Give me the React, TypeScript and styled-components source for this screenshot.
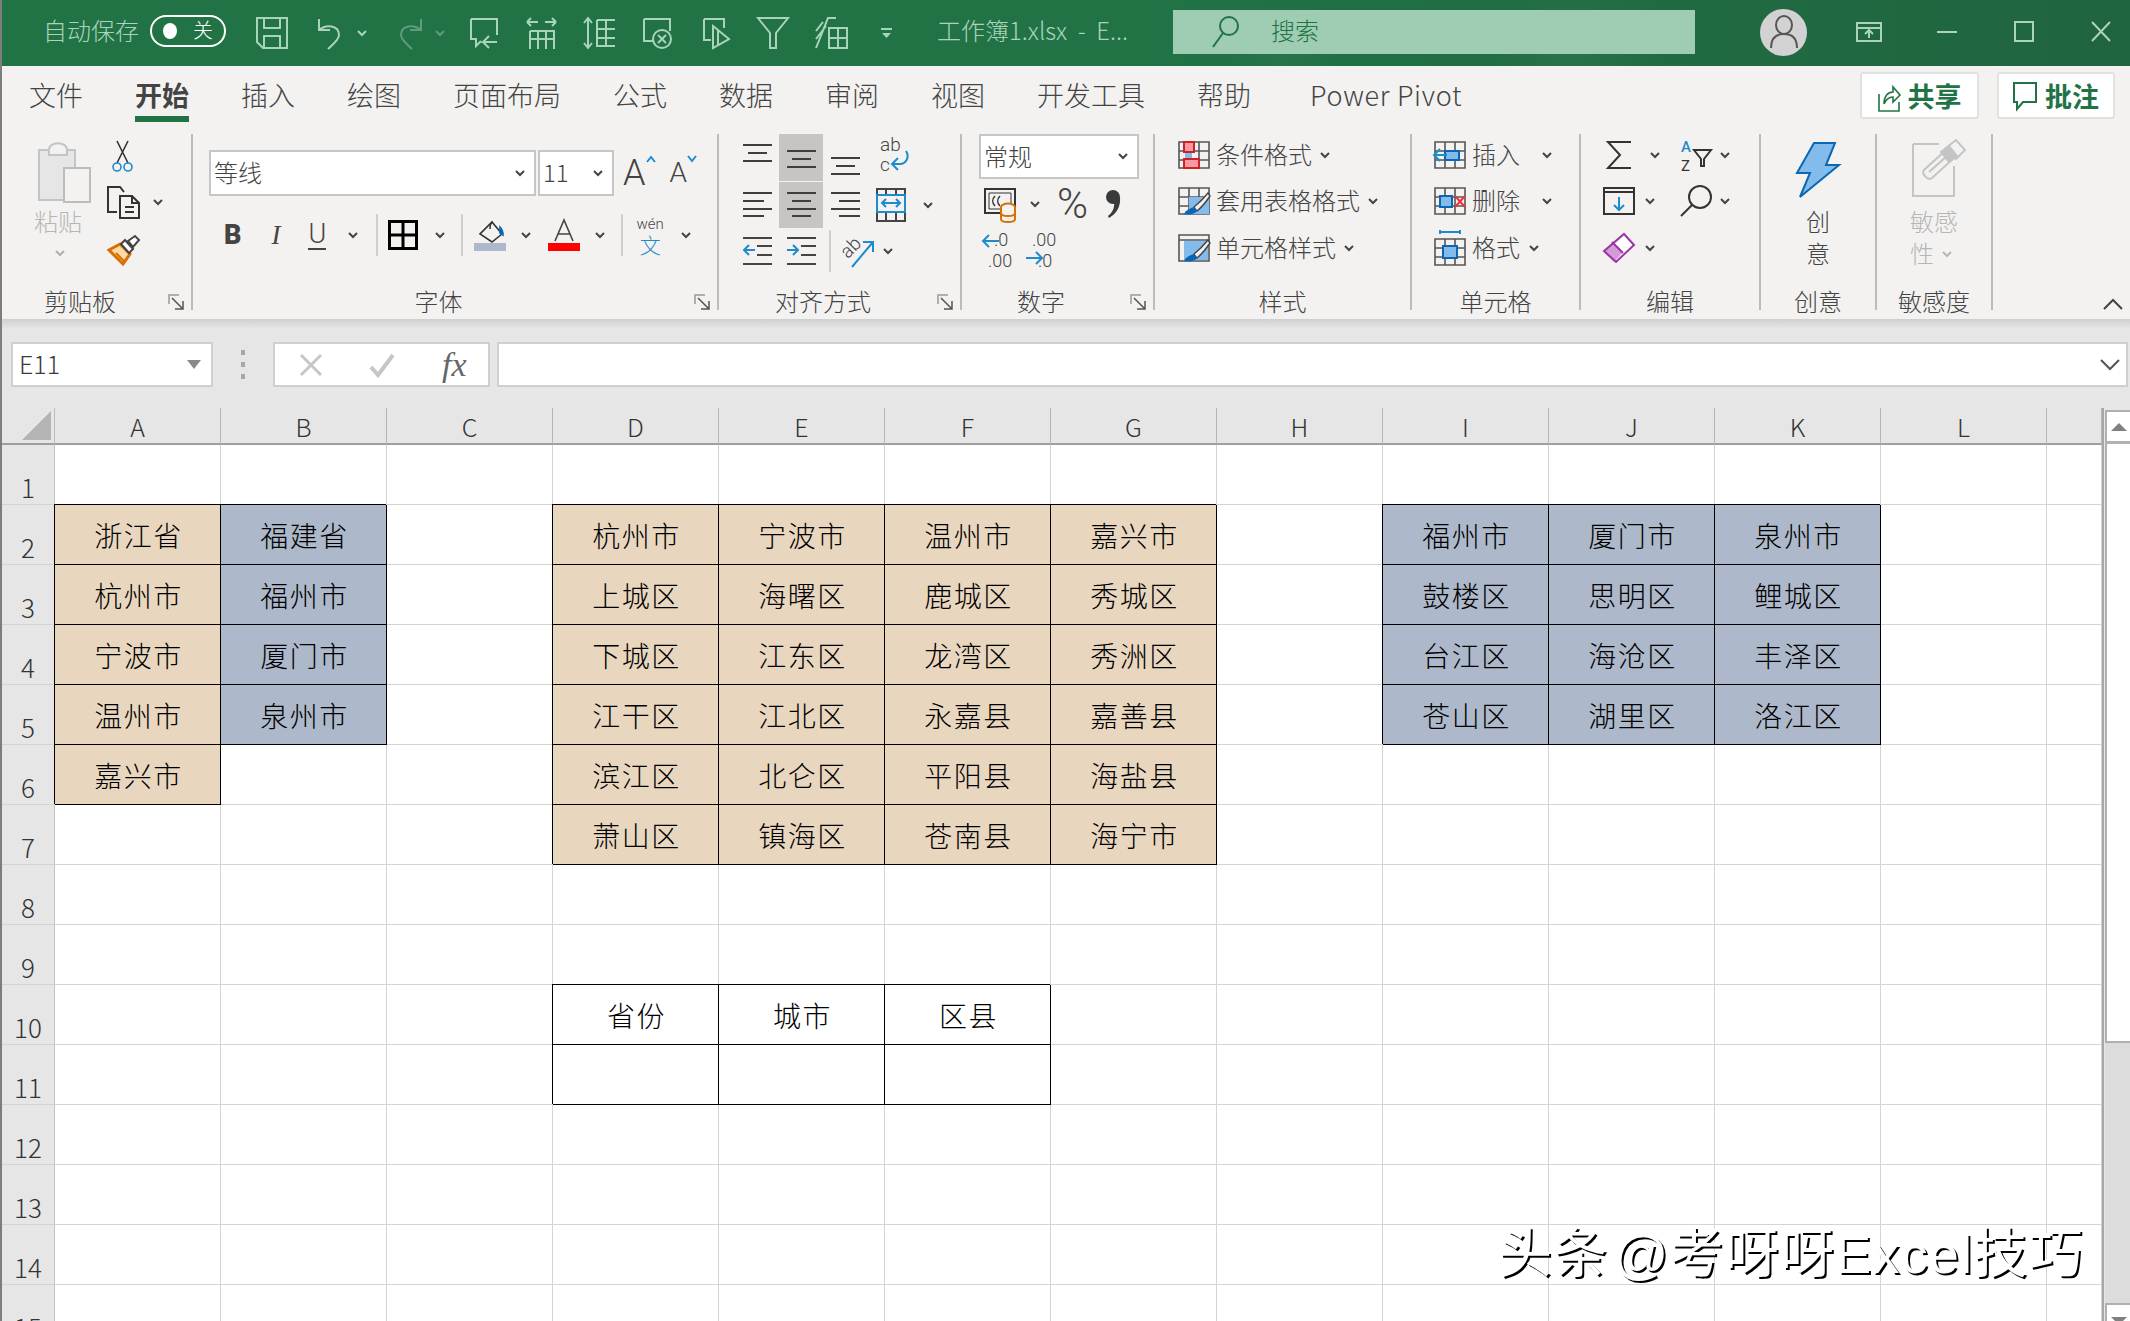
import React from "react";
import styled, { createGlobalStyle } from "styled-components";

const CJK = `"Noto Sans CJK SC", "Noto Sans", sans-serif`;
const INK = "#444";
const BLUE = "#1e8bcd";
const SKY = "#83bbec";
const NAVY = "#0b67b3";
const QAT = "#a9d3bb";

const Global = createGlobalStyle`
  html, body { margin: 0; padding: 0; width: 2130px; height: 1321px; overflow: hidden; background: #fff; }
  body { font-family: ${CJK}; color: #000; }
  svg { display: block; overflow: visible; }
`;

const Window = styled.div`
  position: relative;
  display: flex;
  flex-direction: column;
  box-sizing: border-box;
  width: 2130px;
  height: 1321px;
  overflow: hidden;
  border-left: 2px solid #7d7d7d;
  background: #f3f2f1;
`;

/* title bar */
const TitleBar = styled.header`
  display: flex;
  align-items: center;
  flex: none;
  height: 66px;
  padding-left: 41px;
  background:
    radial-gradient(circle at 1570px 60px, rgba(60, 130, 85, 0.28), transparent 90px),
    radial-gradient(circle at 1280px 70px, rgba(60, 130, 85, 0.22), transparent 60px),
    linear-gradient(90deg, #217346 0, #217346 52%, #20643f 100%);
  color: ${QAT};
  font-size: 24px;
  font-weight: 300;
`;

const BarText = styled.span`
  margin-bottom: 7px;
`;

const Toggle = styled.span`
  display: flex;
  align-items: center;
  justify-content: space-between;
  box-sizing: border-box;
  width: 76px;
  height: 32px;
  margin: 0 0 4px 11px;
  padding: 0 11px;
  border: 2px solid #fff;
  border-radius: 16px;
  color: #fff;
  font-size: 20px;
  line-height: 1;
`;

const ToggleText = styled.span`
  margin-bottom: 3px;
`;

const Knob = styled.i`
  width: 14px;
  height: 16px;
  border-radius: 50%;
  background: #fff;
`;

const Tool = styled.span<{ $ml?: number; $mb?: number; $mt?: number }>`
  display: inline-flex;
  flex: none;
  align-items: center;
  margin-left: ${(p) => p.$ml ?? 0}px;
  margin-bottom: ${(p) => p.$mb ?? 0}px;
  margin-top: ${(p) => p.$mt ?? 0}px;
`;

const DocName = styled.span`
  flex: none;
  width: 203px;
  margin: 0 0 7px 45px;
  white-space: pre;
`;

const SearchBox = styled.div`
  display: flex;
  align-items: center;
  flex: none;
  box-sizing: border-box;
  width: 522px;
  height: 44px;
  margin: 0 0 2px 33px;
  padding-left: 39px;
  background: #9fcdb3;
  color: #217346;
`;

const SearchText = styled.span`
  margin: 0 0 5px 32px;
`;

const Avatar = styled.span`
  display: flex;
  align-items: center;
  justify-content: center;
  flex: none;
  width: 47px;
  height: 47px;
  margin: 0 0 2px 65px;
  border-radius: 50%;
  background: #d2d2d2;
`;

/* tabs */
const TabRow = styled.nav`
  display: flex;
  flex: none;
  height: 64px;
  padding-left: 27px;
  gap: 52px;
  color: ${INK};
  font-size: 27px;
`;

const Tab = styled.span<{ $active?: boolean; $latin?: boolean }>`
  box-sizing: content-box;
  height: 42px;
  margin-left: ${(p) => (p.$latin ? 7 : 0)}px;
  padding-top: 8px;
  line-height: 42px;
  letter-spacing: ${(p) => (p.$latin ? 0.7 : 0)}px;
  font-weight: ${(p) => (p.$active ? 700 : 300)};
  border-bottom: 6px solid ${(p) => (p.$active ? "#217346" : "transparent")};
  white-space: nowrap;
`;

const TabActions = styled.div`
  display: flex;
  gap: 18px;
  margin-left: auto;
  padding: 6px 15px 0 0;
`;

const ActionBtn = styled.button<{ $w: number }>`
  display: flex;
  align-items: center;
  justify-content: center;
  gap: 8px;
  box-sizing: border-box;
  width: ${(p) => p.$w}px;
  height: 47px;
  padding: 0;
  border: 2px solid #e3e1df;
  border-radius: 3px;
  background: #fff;
  color: #217346;
  font: 700 27px ${CJK};
`;

/* ribbon */
const Ribbon = styled.section`
  display: flex;
  flex: none;
  height: 185px;
  padding-top: 4px;
`;

const Group = styled.div<{ $w: number }>`
  display: flex;
  flex-direction: column;
  flex: none;
  box-sizing: border-box;
  width: ${(p) => p.$w}px;
  height: 176px;
  border-right: 2px solid #bcbcbc;
`;

const GroupBody = styled.div`
  display: flex;
  flex: none;
  height: 152px;
`;

const GroupRows = styled.div`
  display: flex;
  flex-direction: column;
  flex: none;
  height: 152px;
`;

const GroupFoot = styled.div`
  display: flex;
  align-items: flex-end;
  height: 24px;
`;

const GroupName = styled.span`
  flex: 1;
  margin-bottom: -7px;
  color: ${INK};
  font-size: 24px;
  font-weight: 300;
  line-height: 32px;
  text-align: center;
`;

const Launcher = styled.span`
  flex: none;
  width: 17px;
  margin: 0 6px 0 10px;
`;

const ToolRow = styled.div<{ $h: number; $mt?: number }>`
  display: flex;
  align-items: center;
  flex: none;
  height: ${(p) => p.$h}px;
  margin-top: ${(p) => p.$mt ?? 0}px;
`;

const ToolText = styled.span<{ $ml?: number; $mt?: number; $muted?: boolean }>`
  flex: none;
  margin-top: ${(p) => p.$mt ?? 0}px;
  margin-left: ${(p) => p.$ml ?? 0}px;
  padding-bottom: 2px;
  color: ${(p) => (p.$muted ? "#b6b6b6" : INK)};
  font-size: 24px;
  font-weight: 300;
  line-height: 30px;
  white-space: nowrap;
`;

const PasteCol = styled.div`
  display: flex;
  flex-direction: column;
  align-items: flex-start;
  flex: none;
  width: 58px;
  margin-left: 32px;
  padding-top: 8px;
`;

const SmallCol = styled.div`
  display: flex;
  flex-direction: column;
  margin-left: 15px;
`;

const Combo = styled.div<{ $w: number; $h?: number; $ml?: number }>`
  display: flex;
  align-items: center;
  justify-content: space-between;
  flex: none;
  box-sizing: border-box;
  width: ${(p) => p.$w}px;
  height: ${(p) => p.$h ?? 46}px;
  margin-left: ${(p) => p.$ml ?? 0}px;
  padding: 0 9px 0 3px;
  border: 2px solid #c6c6c6;
  background: #fff;
  color: ${INK};
  font-size: 24px;
  font-weight: 300;
`;

const ComboText = styled.span`
  padding-bottom: 3px;
`;

const GrowGlyph = styled.span<{ $size: number; $ml: number }>`
  display: inline-flex;
  flex: none;
  align-items: flex-start;
  margin-left: ${(p) => p.$ml}px;
  color: ${INK};
  font: 300 ${(p) => p.$size}px/36px Roboto, sans-serif;
`;

const FontFace = styled.span<{ $ml: number; $kind: "b" | "i" | "u" }>`
  flex: none;
  margin-left: ${(p) => p.$ml}px;
  color: ${INK};
  font-family: ${(p) => (p.$kind === "i" ? `"Liberation Serif", serif` : `Roboto, sans-serif`)};
  font-size: 27px;
  font-style: ${(p) => (p.$kind === "i" ? "italic" : "normal")};
  font-weight: ${(p) => (p.$kind === "b" ? 900 : 300)};
  border-bottom: ${(p) => (p.$kind === "u" ? `2px solid ${INK}` : "0")};
  line-height: 28px;
`;

const VRule = styled.span<{ $ml: number }>`
  flex: none;
  width: 2px;
  height: 42px;
  margin-left: ${(p) => p.$ml}px;
  background: #cfcfcf;
`;

const AlignCell = styled.span<{ $on?: boolean }>`
  display: flex;
  align-items: center;
  justify-content: center;
  flex: none;
  width: 44px;
  height: 100%;
  background: ${(p) => (p.$on ? "#c6c5c3" : "transparent")};
`;

const Percent = styled.span<{ $ml: number }>`
  flex: none;
  margin-left: ${(p) => p.$ml}px;
  color: ${INK};
  font: 300 42px/44px Roboto, sans-serif;
`;

const WenStack = styled.span<{ $ml: number }>`
  display: flex;
  flex-direction: column;
  align-items: center;
  flex: none;
  width: 30px;
  margin-left: ${(p) => p.$ml}px;
  color: ${INK};
  font: 300 15px/18px Roboto, sans-serif;
`;

const WenChar = styled.span`
  color: ${BLUE};
  font: 300 21px/22px ${CJK};
`;

const BigCol = styled.div<{ $align: string; $ml?: number; $pt: number }>`
  display: flex;
  flex-direction: column;
  align-items: ${(p) => p.$align};
  width: 100%;
  margin-left: ${(p) => p.$ml ?? 0}px;
  padding-top: ${(p) => p.$pt}px;
`;

const Collapse = styled.div`
  flex: 1;
  display: flex;
  align-items: flex-end;
  justify-content: flex-end;
  height: 176px;
  padding-right: 7px;
`;

/* formula bar */
const FormulaBand = styled.section`
  display: flex;
  flex: none;
  height: 66px;
  padding-top: 23px;
  background: linear-gradient(180deg, #cfcfcf 0, #e6e6e6 10px);
`;

const FieldBox = styled.div<{ $w: number; $ml: number }>`
  display: flex;
  align-items: center;
  flex: none;
  box-sizing: border-box;
  width: ${(p) => p.$w}px;
  height: 45px;
  margin-left: ${(p) => p.$ml}px;
  border: 2px solid #cfcfcf;
  background: #fff;
`;

const NameText = styled.span`
  flex: 1;
  padding: 0 0 3px 6px;
  color: #3a3a3a;
  font-size: 25px;
  font-weight: 300;
`;

const Grip = styled.span`
  flex: none;
  width: 4px;
  height: 29px;
  margin: 8px 0 0 28px;
  background: repeating-linear-gradient(180deg, #a8a8a8 0 5px, transparent 5px 12px);
`;

const Fx = styled.span`
  margin-left: 47px;
  color: #666;
  font: italic 34px/1 "Liberation Serif", serif;
`;

const EndCaret = styled.span`
  margin-left: auto;
  padding-right: 6px;
`;

/* sheet */
const SheetArea = styled.section`
  display: flex;
  flex: 1;
  min-height: 0;
  background: #e6e6e6;
`;

const Grid = styled.div`
  display: grid;
  flex: none;
  box-sizing: border-box;
  width: 2102px;
  grid-template-columns: 53px repeat(12, 166px) 1fr;
  grid-auto-rows: 60px;
  grid-template-rows: 37px;
  background: #fff;
  border-right: 2px solid #a6a6a6;
  overflow: hidden;
`;

const Corner = styled.div`
  display: flex;
  align-items: flex-end;
  justify-content: flex-end;
  box-sizing: border-box;
  padding: 0 3px 3px 0;
  background: #e6e6e6;
  border-bottom: 2px solid #9e9e9e;
  border-right: 1px solid #bdbdbd;
`;

const ColHead = styled.div`
  box-sizing: border-box;
  background: #e6e6e6;
  border-right: 1px solid #b5b5b5;
  border-bottom: 2px solid #9e9e9e;
  color: #333;
  font: 300 25px/37px ${CJK};
  text-align: center;
`;

const RowHead = styled.div`
  display: flex;
  align-items: flex-end;
  justify-content: center;
  box-sizing: border-box;
  padding-bottom: 1px;
  background: #e6e6e6;
  border-right: 1px solid #c4c4c4;
  border-bottom: 1px solid #d4d4d4;
  color: #333;
  font: 300 26px/32px ${CJK};
`;

type Tone = "none" | "peach" | "blue" | "frame";
const FILL: Record<Tone, string> = { none: "transparent", peach: "#e9d6bf", blue: "#adb9ca", frame: "#fff" };

const Cell = styled.div<{ $tone: Tone }>`
  display: flex;
  align-items: center;
  justify-content: center;
  box-sizing: border-box;
  position: relative;
  padding-left: 2px;
  background: ${(p) => FILL[p.$tone]};
  border-right: 1px solid ${(p) => (p.$tone === "none" ? "#d4d4d4" : "#000")};
  border-bottom: 1px solid ${(p) => (p.$tone === "none" ? "#d4d4d4" : "#000")};
  box-shadow: ${(p) => (p.$tone === "none" ? "none" : "-1px -1px 0 0 #000")};
  font-size: 28px;
  font-weight: 300;
  letter-spacing: 1.5px;
`;

const ScrollRail = styled.aside`
  display: flex;
  flex-direction: column;
  flex: none;
  width: 26px;
  margin-left: 1px;
  padding-top: 2px;
`;

const ScrollBtn = styled.div<{ $h: number; $down?: boolean }>`
  display: flex;
  justify-content: center;
  flex: none;
  box-sizing: border-box;
  height: ${(p) => p.$h}px;
  padding-top: ${(p) => (p.$down ? 12 : 11)}px;
  background: #fff;
  border: 2px solid #b0b0b0;
  border-right: 0;
  border-bottom: 0;
  overflow: hidden;
`;

const ScrollThumb = styled.div`
  flex: none;
  box-sizing: border-box;
  height: 602px;
  background: #fff;
  border-top: 3px solid #b0b0b0;
  border-left: 2px solid #b0b0b0;
  border-bottom: 2px solid #b0b0b0;
`;

const ScrollTrack = styled.div`
  flex: 1;
  background: #dcdcdc;
`;

const Watermark = styled.div`
  position: absolute;
  left: 1496px;
  top: 1222px;
  color: #fff;
  font: 400 54px/64px "Liberation Sans", ${CJK};
  letter-spacing: 1.2px;
  word-spacing: -11px;
  text-shadow: 2px 2px 0 #000, -1px -1px 0 #fff;
  white-space: nowrap;
`;

/* icons */
type IcProps = { w: number; h: number; c?: string; sw?: number; children: React.ReactNode };
const Ic = ({ w, h, c = INK, sw = 2, children }: IcProps) => (
  <svg width={w} height={h} viewBox={`0 0 ${w} ${h}`} fill="none" stroke={c} strokeWidth={sw}>
    {children}
  </svg>
);

const Caret = ({ c = INK }: { c?: string }) => (
  <Ic w={10} h={7} c={c}>
    <path d="M1 1l4 4 4-4" />
  </Ic>
);

const Launch = () => (
  <Ic w={17} h={16} c="#555" sw={1.5}>
    <path d="M1 10V1h10" stroke="#999" />
    <path d="M4 4l11 11M15 7v8H7" />
  </Ic>
);

const Save = () => (
  <Ic w={32} h={32} c={QAT}>
    <path d="M1 1h30v30H7l-6-6zM8 1v10h16V1M8 31V19h16v12" />
  </Ic>
);
const Undo = ({ c = QAT, flip = false }: { c?: string; flip?: boolean }) => (
  <Ic w={31} h={32} c={c}>
    <g transform={flip ? "matrix(-1 0 0 1 31 0)" : undefined}>
      <path d="M3 2v11h11M3 13c7-6 20-5 20 5 0 5-6 9-11 14" />
    </g>
  </Ic>
);
const Qat1 = () => (
  <Ic w={30} h={32} c={QAT}>
    <path d="M2 2h26v16M2 2v20h5v7l5-5M28 25H14l6-6M14 25l6 6" />
  </Ic>
);
const Qat2 = () => (
  <Ic w={31} h={32} c={QAT}>
    <path d="M1 5h11M1 5l4-4M1 5l4 4M30 5H19M30 5l-4-4M30 5l-4 4M4 14h24v18M4 14v18M4 22h24M12 14v18M20 14v18" />
  </Ic>
);
const Qat3 = () => (
  <Ic w={32} h={32} c={QAT}>
    <path d="M5 1v30M1 6l4-5 4 5M1 26l4 5 4-5M14 3h18M14 3v26h18M14 12h18M14 21h18M23 3v26" />
  </Ic>
);
const Qat4 = () => (
  <Ic w={30} h={32} c={QAT}>
    <path d="M2 2h26v12M2 2v22h9" />
    <circle cx="20" cy="22" r="9" />
    <path d="M16 18l8 8M24 18l-8 8" />
  </Ic>
);
const Qat5 = () => (
  <Ic w={28} h={32} c={QAT}>
    <path d="M2 2h20v9M2 2v21h7" />
    <path d="M11 9l16 13-16 9zM16 13v15" />
  </Ic>
);
const Funnel = () => (
  <Ic w={32} h={32} c={QAT}>
    <path d="M1 1h30L19 16v15h-6V16z" />
  </Ic>
);
const Qat7 = () => (
  <Ic w={33} h={32} c={QAT}>
    <path d="M1 31L13 1h8M1 22L11 9M1 14L8 5" />
    <path d="M14 11h18v20H14zM14 21h18M23 11v20" />
  </Ic>
);
const Customize = () => (
  <Ic w={11} h={11} c={QAT}>
    <path d="M0 1h11" />
    <path d="M1 5h9L5.5 10z" fill={QAT} stroke="none" />
  </Ic>
);
const Magnifier = ({ c = "#217346" }: { c?: string }) => (
  <Ic w={27} h={32} c={c}>
    <ellipse cx="17" cy="10" rx="9" ry="9" />
    <path d="M11 17L1 31" />
  </Ic>
);
const Person = () => (
  <Ic w={28} h={34} c="#555">
    <ellipse cx="14" cy="10" rx="8" ry="9" />
    <path d="M1 33c0-10 5-14 13-14s13 4 13 14" />
  </Ic>
);
const RibbonMode = () => (
  <Ic w={26} h={20} c={QAT}>
    <path d="M1 1h24v18H1zM1 6h24M13 16V9M9 12l4-4 4 4" />
  </Ic>
);
const Minimize = () => (
  <Ic w={20} h={2} c={QAT}>
    <path d="M0 1h20" />
  </Ic>
);
const Maximize = () => (
  <Ic w={20} h={21} c={QAT}>
    <path d="M1 1h18v19H1z" />
  </Ic>
);
const Close = () => (
  <Ic w={20} h={21} c={QAT}>
    <path d="M1 1l18 19M19 1L1 20" />
  </Ic>
);
const ShareIcon = () => (
  <Ic w={22} h={32} c="#217346" sw={1.6}>
    <path d="M1 14v17h20v-9M6 24c0-8 4-12 9-12V7l7 8-7 7v-5c-4 0-7 2-9 7z" />
  </Ic>
);
const CommentIcon = () => (
  <Ic w={24} h={30} c="#217346">
    <path d="M1 2h22v19H10l-6 7v-7H1z" />
  </Ic>
);

const Paste = () => (
  <Ic w={54} h={60} c="#c4c4c4">
    <path d="M2 8h36v50H2z" fill="#e6e6e6" />
    <path d="M12 8c0-9 18-9 18 0v5H12z" fill="#f3f2f1" />
    <path d="M27 26h26v34H27z" fill="#f3f2f1" stroke="#bcbcbc" />
  </Ic>
);
const Scissors = () => (
  <Ic w={21} h={32} c="#333" sw={1.6}>
    <path d="M5 1l11 22M16 1L5 23" />
    <circle cx="5" cy="27" r="4" stroke={BLUE} />
    <circle cx="16" cy="27" r="4" stroke={BLUE} />
  </Ic>
);
const Copy = () => (
  <Ic w={33} h={33} c="#333">
    <path d="M10 26H1V1h12l4 5" />
    <path d="M13 10h12l7 7v15H13zM25 10v7h7M18 21h9M18 26h9" fill="#f3f2f1" />
  </Ic>
);
const Painter = () => (
  <svg width={33} height={31} viewBox="0 0 33 31" fill="none">
    <path d="M2 15l11-6 10 10-7 10z" fill="#fbd9a8" stroke="#d86f00" strokeWidth="3" />
    <path d="M9 18l8 8" stroke="#d86f00" strokeWidth="2" />
    <path d="M14 9l4-4 8 9-4 4z" fill="#fff" stroke={INK} strokeWidth="2" />
    <path d="M21 6l7-5 4 4-6 7z" fill="#fff" stroke={INK} strokeWidth="2" />
  </svg>
);
const Borders = () => (
  <Ic w={30} h={30} c="#000" sw={3}>
    <path d="M1.5 1.5h27v27h-27zM15 1.5v27M1.5 15h27" />
  </Ic>
);
const Bucket = () => (
  <Ic w={32} h={32} c="#333" sw={1.6}>
    <path d="M18 3l10 12-10 8-12-8z" fill="#f3f2f1" />
    <path d="M19 3c-2 1-3 2-3 7" />
    <path d="M26 8c2 2 3 5 3 8l-3-2z" fill={NAVY} stroke={NAVY} />
    <rect x="0" y="24" width="32" height="8" fill="#adb9ca" stroke="none" />
  </Ic>
);
const FontColor = () => (
  <svg width={32} height={32} viewBox="0 0 32 32" fill="none">
    <path d="M7 22l9-21 9 21M10 15h12" stroke={INK} strokeWidth="1.6" />
    <rect y="24" width="32" height="8" fill="#f00" />
  </svg>
);

const Lines = ({ w, ys, xs }: { w: number; ys: number[]; xs: [number, number][] }) => (
  <Ic w={w} h={40} c="#3f3f3f" sw={2}>
    {ys.map((y, i) => (
      <path key={y} d={`M${xs[i][0]} ${y}H${xs[i][1]}`} />
    ))}
  </Ic>
);
const VA = ({ top }: { top: number }) => (
  <Lines w={29} ys={[top, top + 8, top + 16]} xs={[[0, 29], [5, 24], [0, 29]]} />
);
const HA = ({ mode }: { mode: "l" | "c" | "r" }) => {
  const xs: Record<string, [number, number][]> = {
    l: [[0, 29], [0, 21], [0, 29], [0, 21]],
    c: [[0, 29], [5, 24], [0, 29], [5, 24]],
    r: [[0, 29], [8, 29], [0, 29], [8, 29]],
  };
  return <Lines w={29} ys={[8, 16, 24, 31]} xs={xs[mode]} />;
};
const Wrap = () => (
  <svg width={30} height={40} viewBox="0 0 30 40" fill="none">
    <text x="0" y="15" fontSize="19" fontFamily="Roboto" fontWeight="300" fill={INK}>ab</text>
    <text x="0" y="35" fontSize="19" fontFamily="Roboto" fontWeight="300" fill={INK}>c</text>
    <path d="M26 15c4 6 0 13-6 13h-7M18 22l-6 6 6 6" stroke={BLUE} strokeWidth="2" />
  </svg>
);
const Merge = () => (
  <Ic w={30} h={34} c={INK}>
    <path d="M1 1h28v32H1zM10 1v6M20 1v6M10 24v9M20 24v9" />
    <path d="M1 7h28v17H1z" stroke={BLUE} fill="#f3f2f1" />
    <path d="M6 15h18M10 11l-4 4 4 4M20 11l4 4-4 4" stroke={BLUE} />
  </Ic>
);
const Indent = ({ out }: { out?: boolean }) => (
  <Ic w={29} h={28} c={INK}>
    <path d="M0 1h29M14 9h15M14 18h15M0 27h29" />
    <path d={out ? "M1 13h11M6 8l-5 5 5 5" : "M0 13h11M6 8l5 5-5 5"} stroke={BLUE} />
  </Ic>
);
const Orient = () => (
  <svg width={34} height={34} viewBox="0 0 34 34" fill="none">
    <text x="0" y="19" fontSize="19" fontFamily="Roboto" fontWeight="300" fill={INK} transform="rotate(-45 11 14)">ab</text>
    <path d="M11 33L32 8M22 8h10v10" stroke={BLUE} strokeWidth="2" />
  </svg>
);
const Currency = () => (
  <svg width={32} height={38} viewBox="0 0 32 38" fill="none">
    <path d="M1 4h30v24H1z" stroke="#333" strokeWidth="2" />
    <path d="M5 8h22v16H5z" stroke="#333" strokeWidth="1" />
    <path d="M11 11c-3 3-3 7 0 10M16 11c-3 3-3 7 0 10" stroke="#333" strokeWidth="1.5" />
    <ellipse cx="24" cy="22" rx="7" ry="3.5" fill="#f3f2f1" stroke="#d86f00" strokeWidth="2" />
    <path d="M17 22v12c0 4 14 4 14 0V22M17 28c0 4 14 4 14 0" fill="#f3f2f1" stroke="#d86f00" strokeWidth="2" />
  </svg>
);
const CommaMark = () => (
  <svg width={18} height={30} viewBox="0 0 18 30">
    <circle cx="9" cy="8" r="7" fill="#3a3a3a" />
    <path d="M16 8c1 10-4 17-11 21l-1-2c4-3 7-8 6-14z" fill="#3a3a3a" />
  </svg>
);
const Decimal = ({ more }: { more?: boolean }) => (
  <svg width={32} height={36} viewBox="0 0 32 36" fill="none">
    <text x={more ? 6 : 12} y="14" fontSize="18" fontFamily="Roboto" fontWeight="300" fill={INK}>{more ? ".00" : ".0"}</text>
    <text x={more ? 12 : 6} y="35" fontSize="18" fontFamily="Roboto" fontWeight="300" fill={INK}>{more ? ".0" : ".00"}</text>
    <path d={more ? "M0 26h16M10 20l6 6-6 6" : "M1 9h16M7 3L1 9l6 6"} stroke={BLUE} strokeWidth="2" />
  </svg>
);

const GridBase = ({ w = 32, h = 28 }: { w?: number; h?: number }) => (
  <path d={`M1 1h${w - 2}v${h - 2}H1zM1 10h${w - 2}M1 19h${w - 2}M11 1v${h - 2}M21 1v${h - 2}`} stroke="#555" strokeWidth="1.6" fill="#f3f2f1" />
);
const Brush = () => (
  <g>
    <path d="M30 6c-4 5-9 10-14 14 1 2 2 3 3 4 5-4 9-9 13-15z" fill="#f3f2f1" stroke="#444" strokeWidth="1.4" />
    <path d="M6 27c2-4 6-6 10-7l3 4c-2 3-7 4-13 3z" fill={NAVY} />
  </g>
);
const CondFormat = () => (
  <svg width={32} height={28} viewBox="0 0 32 28" fill="none">
    <GridBase />
    <rect x="7" y="10" width="7" height="9" fill={SKY} />
    <path d="M6 1h10v10H6zM6 18h15v9H6z" fill="#f59aa0" stroke="#d21f26" strokeWidth="2" />
  </svg>
);
const TableFormat = () => (
  <svg width={32} height={36} viewBox="0 0 32 36" fill="none">
    <g transform="translate(0 4)">
      <GridBase />
      <rect x="11" y="10" width="20" height="17" fill={SKY} />
      <Brush />
    </g>
  </svg>
);
const CellStyle = () => (
  <svg width={32} height={36} viewBox="0 0 32 36" fill="none">
    <g transform="translate(0 4)">
      <path d="M1 1h30v26H1zM1 6h30" stroke="#555" strokeWidth="1.6" />
      <rect x="6" y="7" width="24" height="19" fill={SKY} />
      <Brush />
    </g>
  </svg>
);
const InsertCell = () => (
  <svg width={32} height={28} viewBox="0 0 32 28" fill="none">
    <GridBase />
    <path d="M11 10h14v9H11z" fill={SKY} stroke={NAVY} strokeWidth="2" />
    <path d="M0 14h13M6 8l-6 6 6 6" stroke={BLUE} strokeWidth="2" />
  </svg>
);
const DeleteCell = () => (
  <svg width={32} height={28} viewBox="0 0 32 28" fill="none">
    <GridBase />
    <path d="M6 9h12v11H6z" fill={SKY} stroke={NAVY} strokeWidth="2" />
    <path d="M21 9l10 11M31 9L21 20" stroke="#ee3338" strokeWidth="2" />
  </svg>
);
const FormatCell = () => (
  <svg width={32} height={36} viewBox="0 0 32 36" fill="none">
    <path d="M6 2h20M6 0v4M26 0v4" stroke={BLUE} strokeWidth="2" />
    <g transform="translate(0 8)">
      <GridBase />
      <path d="M9 8h14v12H9z" fill={SKY} stroke={NAVY} strokeWidth="2" />
    </g>
  </svg>
);
const Sum = () => (
  <Ic w={26} h={28} c="#333">
    <path d="M25 1H2l12 13L2 27h23" />
  </Ic>
);
const SortFilter = () => (
  <svg width={32} height={32} viewBox="0 0 32 32" fill="none">
    <text x="1" y="13" fontSize="15" fontFamily="Roboto" fontWeight="500" fill={BLUE}>A</text>
    <text x="1" y="32" fontSize="15" fontFamily="Roboto" fill="#333">Z</text>
    <path d="M14 11h17l-7 9v7h-3v-7z" stroke="#333" strokeWidth="2" />
  </svg>
);
const FillDown = () => (
  <Ic w={32} h={28} c="#333">
    <path d="M1 1h30v26H1zM1 5h30" />
    <path d="M16 10v13M11 18l5 5 5-5" stroke={BLUE} />
  </Ic>
);
const Find = () => (
  <Ic w={32} h={32} c="#333">
    <circle cx="20" cy="12" r="11" />
    <path d="M12 20L1 31" />
  </Ic>
);
const Eraser = () => (
  <svg width={32} height={30} viewBox="0 0 32 30" fill="none">
    <path d="M10 15L21 1l10 10-11 14z" fill="#fff" />
    <path d="M1 19L10 9l10 10-9 10z" fill="#d29ad6" />
    <path d="M21 1l10 11-18 17L1 18zM9 9l11 11" stroke="#9b35a6" strokeWidth="2" />
  </svg>
);
const Bolt = () => (
  <svg width={44} height={56} viewBox="0 0 44 56">
    <path d="M18 1h21l-9 22h13L4 55l10-24H1z" fill={SKY} stroke={NAVY} strokeWidth="2" />
  </svg>
);
const Sensitivity = () => (
  <svg width={56} height={60} viewBox="0 0 56 60" fill="none" stroke="#c4c4c4" strokeWidth="2">
    <path d="M3 6h26M3 6v52h41V28" />
    <path d="M14 32l22-20 8 8-22 20c-4 3-11-4-8-8zM19 34l18-16" />
    <path d="M36 10L46 2l9 10-9 9z" />
    <path d="M31 14l8-6 8 10-8 6z" fill="#c4c4c4" />
  </svg>
);
const ChevronUp = () => (
  <Ic w={20} h={12} c={INK}>
    <path d="M1 11l9-9 9 9" />
  </Ic>
);

const TABS = ["文件", "开始", "插入", "绘图", "页面布局", "公式", "数据", "审阅", "视图", "开发工具", "帮助", "Power Pivot"];
const COLS = ["A", "B", "C", "D", "E", "F", "G", "H", "I", "J", "K", "L"];

type CellValue = string | null;
const _ = null;
const SHEET: Record<number, CellValue[]> = {
  2: ["浙江省", "福建省", _, "杭州市", "宁波市", "温州市", "嘉兴市", _, "福州市", "厦门市", "泉州市"],
  3: ["杭州市", "福州市", _, "上城区", "海曙区", "鹿城区", "秀城区", _, "鼓楼区", "思明区", "鲤城区"],
  4: ["宁波市", "厦门市", _, "下城区", "江东区", "龙湾区", "秀洲区", _, "台江区", "海沧区", "丰泽区"],
  5: ["温州市", "泉州市", _, "江干区", "江北区", "永嘉县", "嘉善县", _, "苍山区", "湖里区", "洛江区"],
  6: ["嘉兴市", _, _, "滨江区", "北仑区", "平阳县", "海盐县"],
  7: [_, _, _, "萧山区", "镇海区", "苍南县", "海宁市"],
  10: [_, _, _, "省份", "城市", "区县"],
  11: [_, _, _, "", "", ""],
};

const toneOf = (row: number, col: number, value: CellValue): Tone => {
  if (value === null || value === undefined) return "none";
  if (row >= 10) return "frame";
  return col === 1 || col >= 8 ? "blue" : "peach";
};

const Sheet = () => (
  <Grid>
    <Corner>
      <svg width={29} height={29} viewBox="0 0 29 29">
        <path d="M29 0v29H0z" fill="#b4b4b4" />
      </svg>
    </Corner>
    {COLS.map((c) => (
      <ColHead key={c}>{c}</ColHead>
    ))}
    <ColHead />
    {Array.from({ length: 15 }, (_r, i) => i + 1).flatMap((row) => [
      <RowHead key={`h${row}`}>{row}</RowHead>,
      ...Array.from({ length: 13 }, (_c, col) => {
        const value = SHEET[row]?.[col] ?? null;
        return (
          <Cell key={`${row}-${col}`} $tone={toneOf(row, col, value)}>
            {value}
          </Cell>
        );
      }),
    ])}
  </Grid>
);

const App = () => (
  <Window>
    <Global />
    <TitleBar>
      <BarText>自动保存</BarText>
      <Toggle>
        <Knob />
        <ToggleText>关</ToggleText>
      </Toggle>
      <Tool $ml={30}><Save /></Tool>
      <Tool $ml={28}><Undo /></Tool>
      <Tool $ml={10}><Caret c={QAT} /></Tool>
      <Tool $ml={26}><Undo c="#5f9b7c" flip /></Tool>
      <Tool $ml={11}><Caret c="#5f9b7c" /></Tool>
      <Tool $ml={24}><Qat1 /></Tool>
      <Tool $ml={27}><Qat2 /></Tool>
      <Tool $ml={26}><Qat3 /></Tool>
      <Tool $ml={27}><Qat4 /></Tool>
      <Tool $ml={30}><Qat5 /></Tool>
      <Tool $ml={27}><Funnel /></Tool>
      <Tool $ml={26}><Qat7 /></Tool>
      <Tool $ml={33}><Customize /></Tool>
      <DocName>工作簿1.xlsx  -  E...</DocName>
      <SearchBox>
        <Magnifier />
        <SearchText>搜索</SearchText>
      </SearchBox>
      <Avatar><Person /></Avatar>
      <Tool $ml={49} $mb={3}><RibbonMode /></Tool>
      <Tool $ml={55} $mb={3}><Minimize /></Tool>
      <Tool $ml={57} $mb={3}><Maximize /></Tool>
      <Tool $ml={57} $mb={3}><Close /></Tool>
    </TitleBar>

    <TabRow>
      {TABS.map((t) => (
        <Tab key={t} $active={t === "开始"} $latin={t === "Power Pivot"}>{t}</Tab>
      ))}
      <TabActions>
        <ActionBtn $w={119}><ShareIcon />共享</ActionBtn>
        <ActionBtn $w={118}><CommentIcon />批注</ActionBtn>
      </TabActions>
    </TabRow>

    <Ribbon>
      <Group $w={191}>
        <GroupBody>
          <PasteCol>
            <Tool $ml={3}><Paste /></Tool>
            <ToolText $muted $mt={4}>粘贴</ToolText>
            <Tool $ml={21} $mt={12}><Caret c="#b0b0b0" /></Tool>
          </PasteCol>
          <SmallCol>
            <ToolRow $h={44}><Tool $ml={5}><Scissors /></Tool></ToolRow>
            <ToolRow $h={48}><Copy /><Tool $ml={13}><Caret /></Tool></ToolRow>
            <ToolRow $h={48}><Painter /></ToolRow>
          </SmallCol>
        </GroupBody>
        <GroupFoot><GroupName>剪贴板</GroupName><Launcher><Launch /></Launcher></GroupFoot>
      </Group>

      <Group $w={526}>
        <GroupRows>
          <ToolRow $h={46} $mt={16}>
            <Combo $w={327} $ml={16}><ComboText>等线</ComboText><Caret /></Combo>
            <Combo $w={76} $ml={2}><ComboText>11</ComboText><Caret /></Combo>
            <GrowGlyph $size={36} $ml={9}>
              A
              <Ic w={10} h={8} c={BLUE}><path d="M1 7l4-5 4 5" /></Ic>
            </GrowGlyph>
            <GrowGlyph $size={28} $ml={14}>
              A
              <Ic w={10} h={8} c={BLUE}><path d="M1 1l4 5 4-5" /></Ic>
            </GrowGlyph>
          </ToolRow>
          <ToolRow $h={46} $mt={16}>
            <FontFace $kind="b" $ml={31}>B</FontFace>
            <FontFace $kind="i" $ml={30}>I</FontFace>
            <FontFace $kind="u" $ml={28}>U</FontFace>
            <Tool $ml={22}><Caret /></Tool>
            <VRule $ml={18} />
            <Tool $ml={10}><Borders /></Tool>
            <Tool $ml={17}><Caret /></Tool>
            <VRule $ml={16} />
            <Tool $ml={11}><Bucket /></Tool>
            <Tool $ml={15}><Caret /></Tool>
            <Tool $ml={17}><FontColor /></Tool>
            <Tool $ml={15}><Caret /></Tool>
            <VRule $ml={16} />
            <WenStack $ml={12}>wén<WenChar>文</WenChar></WenStack>
            <Tool $ml={16}><Caret /></Tool>
          </ToolRow>
        </GroupRows>
        <GroupFoot><GroupName>字体</GroupName><Launcher><Launch /></Launcher></GroupFoot>
      </Group>

      <Group $w={243}>
        <GroupRows>
          <ToolRow $h={47}>
            <Tool $ml={16}><AlignCell><VA top={7} /></AlignCell></Tool>
            <AlignCell $on><VA top={13} /></AlignCell>
            <AlignCell><VA top={20} /></AlignCell>
            <Tool $ml={13} $mb={4}><Wrap /></Tool>
          </ToolRow>
          <ToolRow $h={46} $mt={1}>
            <Tool $ml={16}><AlignCell><HA mode="l" /></AlignCell></Tool>
            <AlignCell $on><HA mode="c" /></AlignCell>
            <AlignCell><HA mode="r" /></AlignCell>
            <Tool $ml={9}><Merge /></Tool>
            <Tool $ml={17}><Caret /></Tool>
          </ToolRow>
          <ToolRow $h={46}>
            <Tool $ml={16}><AlignCell><Indent out /></AlignCell></Tool>
            <AlignCell><Indent /></AlignCell>
            <VRule $ml={6} />
            <Tool $ml={10}><Orient /></Tool>
            <Tool $ml={8}><Caret /></Tool>
          </ToolRow>
        </GroupRows>
        <GroupFoot><GroupName>对齐方式</GroupName><Launcher><Launch /></Launcher></GroupFoot>
      </Group>

      <Group $w={193}>
        <GroupRows>
          <ToolRow $h={45}>
            <Combo $w={160} $h={45} $ml={17}><ComboText>常规</ComboText><Caret /></Combo>
          </ToolRow>
          <ToolRow $h={50}>
            <Tool $ml={22}><Currency /></Tool>
            <Tool $ml={14}><Caret /></Tool>
            <Percent $ml={17}>%</Percent>
            <Tool $ml={16}><CommaMark /></Tool>
          </ToolRow>
          <ToolRow $h={42}>
            <Tool $ml={20}><Decimal /></Tool>
            <Tool $ml={12}><Decimal more /></Tool>
          </ToolRow>
        </GroupRows>
        <GroupFoot><GroupName>数字</GroupName><Launcher><Launch /></Launcher></GroupFoot>
      </Group>

      <Group $w={257}>
        <GroupRows>
          <ToolRow $h={42}><Tool $ml={23}><CondFormat /></Tool><ToolText $ml={6}>条件格式</ToolText><Tool $ml={8}><Caret /></Tool></ToolRow>
          <ToolRow $h={50}><Tool $ml={23}><TableFormat /></Tool><ToolText $ml={6}>套用表格格式</ToolText><Tool $ml={8}><Caret /></Tool></ToolRow>
          <ToolRow $h={44}><Tool $ml={23}><CellStyle /></Tool><ToolText $ml={6}>单元格样式</ToolText><Tool $ml={8}><Caret /></Tool></ToolRow>
        </GroupRows>
        <GroupFoot><GroupName>样式</GroupName></GroupFoot>
      </Group>

      <Group $w={169}>
        <GroupRows>
          <ToolRow $h={42}><Tool $ml={22}><InsertCell /></Tool><ToolText $ml={6}>插入</ToolText><Tool $ml={22}><Caret /></Tool></ToolRow>
          <ToolRow $h={50}><Tool $ml={22}><DeleteCell /></Tool><ToolText $ml={6}>删除</ToolText><Tool $ml={22}><Caret /></Tool></ToolRow>
          <ToolRow $h={44}><Tool $ml={22}><FormatCell /></Tool><ToolText $ml={6}>格式</ToolText><Tool $ml={9}><Caret /></Tool></ToolRow>
        </GroupRows>
        <GroupFoot><GroupName>单元格</GroupName></GroupFoot>
      </Group>

      <Group $w={180}>
        <GroupRows>
          <ToolRow $h={42}>
            <Tool $ml={25}><Sum /></Tool><Tool $ml={18}><Caret /></Tool>
            <Tool $ml={20}><SortFilter /></Tool><Tool $ml={8}><Caret /></Tool>
          </ToolRow>
          <ToolRow $h={50}>
            <Tool $ml={22}><FillDown /></Tool><Tool $ml={10}><Caret /></Tool>
            <Tool $ml={25}><Find /></Tool><Tool $ml={8}><Caret /></Tool>
          </ToolRow>
          <ToolRow $h={44}>
            <Tool $ml={22}><Eraser /></Tool><Tool $ml={10}><Caret /></Tool>
          </ToolRow>
        </GroupRows>
        <GroupFoot><GroupName>编辑</GroupName></GroupFoot>
      </Group>

      <Group $w={116}>
        <GroupBody>
          <BigCol $align="center" $pt={8}>
            <Bolt />
            <ToolText $mt={8}>创</ToolText>
            <ToolText>意</ToolText>
          </BigCol>
        </GroupBody>
        <GroupFoot><GroupName>创意</GroupName></GroupFoot>
      </Group>

      <Group $w={116}>
        <GroupBody>
          <BigCol $align="flex-start" $ml={33} $pt={4}>
            <Sensitivity />
            <ToolText $muted $mt={8}>敏感</ToolText>
            <ToolRow $h={32}>
              <ToolText $muted>性</ToolText>
              <Tool $ml={8}><Caret c="#b6b6b6" /></Tool>
            </ToolRow>
          </BigCol>
        </GroupBody>
        <GroupFoot><GroupName>敏感度</GroupName></GroupFoot>
      </Group>

      <Collapse><ChevronUp /></Collapse>
    </Ribbon>

    <FormulaBand>
      <FieldBox $w={202} $ml={9}>
        <NameText>E11</NameText>
        <Tool $ml={0}>
          <svg width={34} height={10} viewBox="0 0 34 10"><path d="M10 0h14l-7 9z" fill="#8a8a8a" /></svg>
        </Tool>
      </FieldBox>
      <Grip />
      <FieldBox $w={217} $ml={28}>
        <Tool $ml={24}><Ic w={24} h={24} c="#c6c6c6" sw={3}><path d="M2 2l20 20M22 2L2 22" /></Ic></Tool>
        <Tool $ml={46}><Ic w={26} h={24} c="#c6c6c6" sw={4}><path d="M2 14l7 8L24 2" /></Ic></Tool>
        <Fx>fx</Fx>
      </FieldBox>
      <FieldBox $w={1631} $ml={7}>
        <EndCaret>
          <Ic w={20} h={12} c="#555"><path d="M1 1l9 9 9-9" /></Ic>
        </EndCaret>
      </FieldBox>
    </FormulaBand>

    <SheetArea>
      <Sheet />
      <ScrollRail>
        <ScrollBtn $h={31}>
          <svg width={16} height={8} viewBox="0 0 16 8"><path d="M8 0l8 8H0z" fill="#808080" /></svg>
        </ScrollBtn>
        <ScrollThumb />
        <ScrollTrack />
        <ScrollBtn $h={18} $down>
          <svg width={16} height={8} viewBox="0 0 16 8"><path d="M8 8l8-8H0z" fill="#808080" /></svg>
        </ScrollBtn>
      </ScrollRail>
    </SheetArea>

    <Watermark>头条 @考呀呀Excel技巧</Watermark>
  </Window>
);

export default App;
